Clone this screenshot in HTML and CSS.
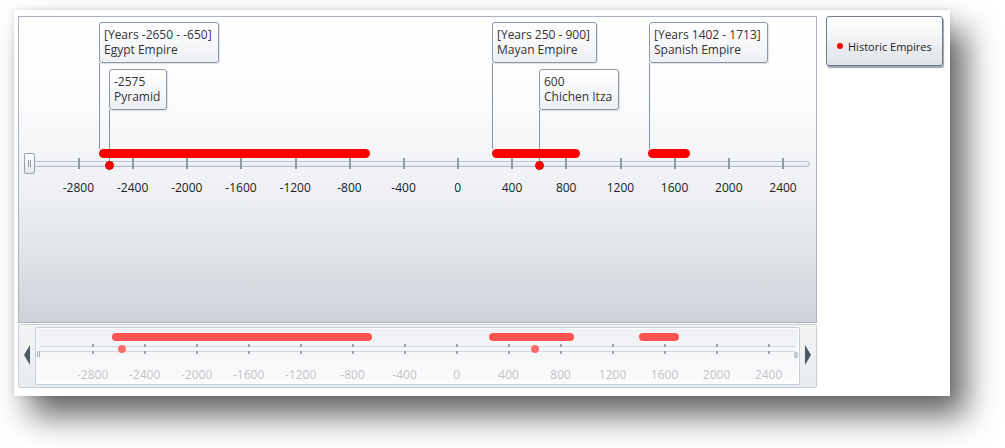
FILE: index.html
```html
<!DOCTYPE html>
<html>
<head>
<meta charset="utf-8">
<link rel="stylesheet" href="styles.css">
</head>
<body>
<div class="panel">
  <div class="main">
    <div class="chart">
      <div class="leader" style="left:80px;top:46px;height:86px"></div>
      <div class="leader" style="left:90px;top:93px;height:55px"></div>
      <div class="leader" style="left:473px;top:46px;height:86px"></div>
      <div class="leader" style="left:520px;top:93px;height:55px"></div>
      <div class="leader" style="left:630px;top:46px;height:86px"></div>

      <div class="callout" style="left:80px;top:5px">[Years -2650 - -650]<br>Egypt Empire</div>
      <div class="callout" style="left:90px;top:52px">-2575<br>Pyramid</div>
      <div class="callout" style="left:473px;top:5px">[Years 250 - 900]<br>Mayan Empire</div>
      <div class="callout" style="left:520px;top:52px">600<br>Chichen Itza</div>
      <div class="callout" style="left:630px;top:5px">[Years 1402 - 1713]<br>Spanish Empire</div>

      <div class="track"></div>
      <div class="tick" style="left:59px"></div>
      <div class="tick" style="left:113px"></div>
      <div class="tick" style="left:167px"></div>
      <div class="tick" style="left:221px"></div>
      <div class="tick" style="left:276px"></div>
      <div class="tick" style="left:330px"></div>
      <div class="tick" style="left:384px"></div>
      <div class="tick" style="left:438px"></div>
      <div class="tick" style="left:492px"></div>
      <div class="tick" style="left:546px"></div>
      <div class="tick" style="left:601px"></div>
      <div class="tick" style="left:655px"></div>
      <div class="tick" style="left:709px"></div>
      <div class="tick" style="left:763px"></div>

      <div class="label" style="left:59.4px">-2800</div>
      <div class="label" style="left:113.6px">-2400</div>
      <div class="label" style="left:167.8px">-2000</div>
      <div class="label" style="left:222px">-1600</div>
      <div class="label" style="left:276.2px">-1200</div>
      <div class="label" style="left:330.4px">-800</div>
      <div class="label" style="left:384.6px">-400</div>
      <div class="label" style="left:438.8px">0</div>
      <div class="label" style="left:493px">400</div>
      <div class="label" style="left:547.2px">800</div>
      <div class="label" style="left:601.4px">1200</div>
      <div class="label" style="left:655.6px">1600</div>
      <div class="label" style="left:709.8px">2000</div>
      <div class="label" style="left:764px">2400</div>

      <div class="bar" style="left:80px;width:271px"></div>
      <div class="bar" style="left:473px;width:88px"></div>
      <div class="bar" style="left:629px;width:42px"></div>

      <div class="point" style="left:90px"></div>
      <div class="point" style="left:520px"></div>

      <div class="thumb"><span></span><span></span></div>
    </div>

    <div class="nav">
      <div class="nav-btn">
        <svg width="6" height="20" viewBox="0 0 6 20"><polygon points="6,0 6,20 0,10" fill="#4b5866"/></svg>
      </div>
      <div class="nav-frame">
        <div class="grip-left"><span></span><span></span></div>
        <div class="grip-right"></div>
        <div class="nav-line" style="top:18px"></div>
        <div class="nav-line" style="top:23px"></div>

        <div class="ntick" style="left:56.6px"></div>
        <div class="ntick" style="left:108.6px"></div>
        <div class="ntick" style="left:160.6px"></div>
        <div class="ntick" style="left:212.6px"></div>
        <div class="ntick" style="left:264.6px"></div>
        <div class="ntick" style="left:316.6px"></div>
        <div class="ntick" style="left:368.6px"></div>
        <div class="ntick" style="left:420.6px"></div>
        <div class="ntick" style="left:472.6px"></div>
        <div class="ntick" style="left:524.6px"></div>
        <div class="ntick" style="left:576.6px"></div>
        <div class="ntick" style="left:628.6px"></div>
        <div class="ntick" style="left:680.6px"></div>
        <div class="ntick" style="left:732.6px"></div>

        <div class="nlabel" style="left:56.6px">-2800</div>
        <div class="nlabel" style="left:108.6px">-2400</div>
        <div class="nlabel" style="left:160.6px">-2000</div>
        <div class="nlabel" style="left:212.6px">-1600</div>
        <div class="nlabel" style="left:264.6px">-1200</div>
        <div class="nlabel" style="left:316.6px">-800</div>
        <div class="nlabel" style="left:368.6px">-400</div>
        <div class="nlabel" style="left:420.6px">0</div>
        <div class="nlabel" style="left:472.6px">400</div>
        <div class="nlabel" style="left:524.6px">800</div>
        <div class="nlabel" style="left:576.6px">1200</div>
        <div class="nlabel" style="left:628.6px">1600</div>
        <div class="nlabel" style="left:680.6px">2000</div>
        <div class="nlabel" style="left:732.6px">2400</div>

        <div class="nbar" style="left:76px;width:260px"></div>
        <div class="nbar" style="left:453px;width:85px"></div>
        <div class="nbar" style="left:603px;width:40px"></div>

        <div class="npoint" style="left:85.9px"></div>
        <div class="npoint" style="left:498.6px"></div>
      </div>
      <div class="nav-btn">
        <svg width="6" height="20" viewBox="0 0 6 20"><polygon points="0,0 0,20 6,10" fill="#4b5866"/></svg>
      </div>
    </div>
  </div>

  <div class="legend"><span class="legend-dot"></span>Historic Empires</div>
</div>
</body>
</html>
```

FILE: styles.css
```css
html, body {
  margin: 0;
  padding: 0;
  background: #ffffff;
}

body {
  min-height: 448px;
  box-sizing: border-box;
  padding-top: 10px;
  font-family: "Open Sans", "DejaVu Sans", sans-serif;
  font-size: 12px;
  color: #222;
}

.panel {
  margin: 0 0 0 14px;
  width: 936px;
  height: 386px;
  box-sizing: border-box;
  padding: 6px 0 0 4px;
  background: #fff;
  display: flex;
  align-items: flex-start;
  box-shadow: 0 0 6px rgba(0, 0, 0, 0.12), 16px 20px 30px rgba(0, 0, 0, 0.6);
}

.main {
  width: 799px;
  display: flex;
  flex-direction: column;
}

.chart {
  position: relative;
  height: 307px;
  box-sizing: border-box;
  border: 1px solid #a9b4c0;
  background: linear-gradient(to bottom, #ffffff 0%, #fcfcfd 25%, #eff1f4 55%, #dfe2e7 80%, #cdd2d9 100%);
}

.leader {
  position: absolute;
  width: 1px;
  background: #8594a3;
}

.callout {
  position: absolute;
  padding: 4px 6px 5px 4px;
  border: 1px solid #8c9aa8;
  border-radius: 3px;
  background: linear-gradient(to bottom, #ffffff, #eef0f3);
  box-shadow: 1px 1px 1px rgba(0, 0, 0, 0.12);
  line-height: 15px;
  color: #333;
  white-space: nowrap;
}

.track {
  position: absolute;
  left: 7px;
  top: 144px;
  width: 784px;
  height: 6px;
  box-sizing: border-box;
  border: 1px solid #b3c0cd;
  border-radius: 3px;
  background: linear-gradient(to bottom, #f5f7f9, #e2e8ee);
}

.tick {
  position: absolute;
  top: 141px;
  width: 2px;
  height: 11px;
  background: #8f9aa6;
}

.label {
  position: absolute;
  top: 164px;
  line-height: 14px;
  transform: translateX(-50%);
  color: #222;
  white-space: nowrap;
}

.bar {
  position: absolute;
  top: 132px;
  height: 9px;
  border-radius: 5px;
  background: #ff0000;
}

.point {
  position: absolute;
  top: 144px;
  width: 9px;
  height: 9px;
  margin-left: -4.5px;
  box-sizing: border-box;
  border-radius: 50%;
  background: #ff0000;
  border: 1px solid #d00000;
}

.thumb {
  position: absolute;
  left: 5px;
  top: 136px;
  width: 11px;
  height: 21px;
  box-sizing: border-box;
  border: 1px solid #95a3b1;
  border-radius: 2px;
  background: linear-gradient(to bottom, #ffffff, #e3e8ed);
  display: flex;
  justify-content: center;
  align-items: center;
  gap: 1px;
}

.thumb span {
  width: 1px;
  height: 7px;
  background: #8e9aa6;
}

.nav {
  margin-top: 1px;
  height: 64px;
  box-sizing: border-box;
  border: 1px solid #c6cdd5;
  border-radius: 2px;
  padding: 2px 0 2px 0;
  background: linear-gradient(to bottom, #f3f4f6, #e8ebee);
  display: flex;
}

.nav-btn {
  width: 16px;
  display: flex;
  align-items: center;
  justify-content: center;
  padding-bottom: 3px;
}

.nav-frame {
  position: relative;
  flex: 1;
  box-sizing: border-box;
  border: 1px solid #c8ced5;
  border-radius: 2px;
  background: linear-gradient(to bottom, #eef0f3 0%, #f5f6f8 40%, #fbfbfc 100%);
  box-shadow: inset 0 0 0 1px #ffffff;
}

.grip-left {
  position: absolute;
  left: 1px;
  top: 23px;
  height: 6px;
  display: flex;
  gap: 1px;
}

.grip-left span {
  width: 1px;
  height: 6px;
  background: #a8b0b8;
}

.grip-right {
  position: absolute;
  right: 1px;
  top: 24px;
  width: 4px;
  height: 6px;
  background: #c4c9cf;
}

.nav-line {
  position: absolute;
  left: 4px;
  right: 4px;
  height: 1px;
  background: #d3d8de;
}

.ntick {
  position: absolute;
  top: 16px;
  width: 2px;
  height: 10px;
  margin-left: -1px;
  background: linear-gradient(to bottom, #9aa1a8 0, #9aa1a8 3px, transparent 3px, transparent 7px, #9aa1a8 7px);
}

.nlabel {
  position: absolute;
  top: 40px;
  line-height: 14px;
  transform: translateX(-50%);
  color: #c2c4c7;
  white-space: nowrap;
}

.nbar {
  position: absolute;
  top: 5px;
  height: 8px;
  border-radius: 4px;
  background: #ff5252;
}

.npoint {
  position: absolute;
  top: 17px;
  width: 8px;
  height: 8px;
  margin-left: -4px;
  border-radius: 50%;
  background: #ff6b6b;
}

.legend {
  margin-left: 9px;
  width: 117px;
  height: 50px;
  box-sizing: border-box;
  border: 1px solid #6f7b87;
  border-radius: 3px;
  background: linear-gradient(to bottom, #ffffff, #dfe3e8);
  box-shadow: 1px 2px 1px rgba(40, 50, 60, 0.45);
  display: flex;
  align-items: center;
  padding: 10px 0 0 10px;
  font-size: 11px;
  color: #222;
  white-space: nowrap;
}

.legend-dot {
  width: 6px;
  height: 6px;
  border-radius: 50%;
  background: #ff0000;
  margin-right: 5px;
}
```
